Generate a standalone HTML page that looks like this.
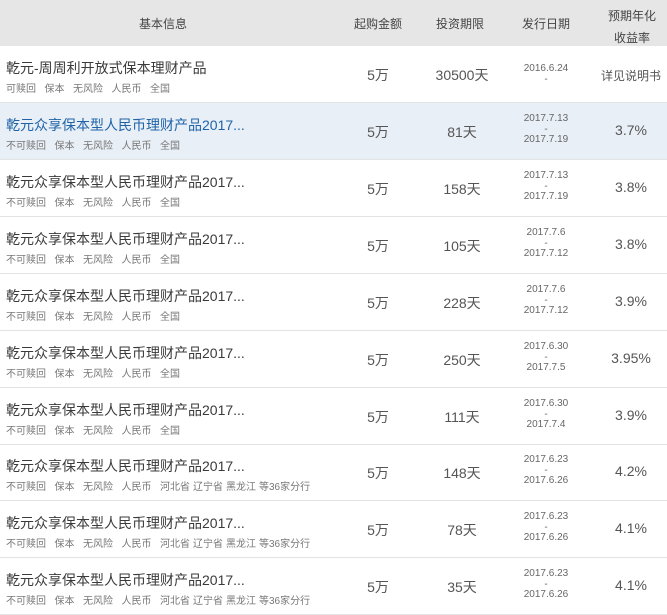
<!DOCTYPE html>
<html><head><meta charset="utf-8"><style>
*{margin:0;padding:0;box-sizing:border-box}
body{width:667px;height:607px;overflow:hidden;background:#fff;font-family:"Liberation Sans","Noto Sans CJK SC",sans-serif;color:#333;position:relative}
.hd{position:absolute;left:0;top:0;width:667px;height:46px;background:#e6e6e6;font-size:12px;color:#444}
.hd span{position:absolute;transform:translateX(-50%);white-space:nowrap;text-align:center}
.row{position:absolute;left:0;width:667px;height:57px;border-bottom:1px solid #e3e3e3}
.row.hl{background:#e9eff6}
.t{position:absolute;left:6px;top:12px;font-size:14px;white-space:nowrap;color:#3a3a3a}
.hl .t{color:#1e63a8}
.g{position:absolute;left:6px;top:34px;font-size:10px;color:#777;white-space:nowrap}
.g i{font-style:normal;margin-right:8.5px}
.c{position:absolute;transform:translateX(-50%);white-space:nowrap;text-align:center}
.a{left:378px;top:19px;font-size:14px;color:#555}
.p{left:462px;top:19px;font-size:14px;color:#555}
.d{left:546px;top:11px;font-size:10px;line-height:10.5px;color:#666}
.r{left:631px;top:19px;font-size:14px;color:#555}
</style></head><body>
<div class="hd">
<span style="left:163px;top:15px">基本信息</span>
<span style="left:378px;top:15px">起购金额</span>
<span style="left:460px;top:15px">投资期限</span>
<span style="left:546px;top:15px">发行日期</span>
<span style="left:632px;top:5px;line-height:22px">预期年化<br>收益率</span>
</div>

<div class="row" style="top:46px"><div class="t">乾元-周周利开放式保本理财产品</div><div class="g"><i>可赎回</i><i>保本</i><i>无风险</i><i>人民币</i><i>全国</i></div><div class="c a">5万</div><div class="c p">30500天</div><div class="c d" style="top:18px">2016.6.24<br>-</div><div class="c r" style="font-size:12px;top:21px">详见说明书</div></div>

<div class="row hl" style="top:103px"><div class="t">乾元众享保本型人民币理财产品2017...</div><div class="g"><i>不可赎回</i><i>保本</i><i>无风险</i><i>人民币</i><i>全国</i></div><div class="c a">5万</div><div class="c p">81天</div><div class="c d">2017.7.13<br>-<br>2017.7.19</div><div class="c r">3.7%</div></div>

<div class="row" style="top:160px"><div class="t">乾元众享保本型人民币理财产品2017...</div><div class="g"><i>不可赎回</i><i>保本</i><i>无风险</i><i>人民币</i><i>全国</i></div><div class="c a">5万</div><div class="c p">158天</div><div class="c d">2017.7.13<br>-<br>2017.7.19</div><div class="c r">3.8%</div></div>

<div class="row" style="top:217px"><div class="t">乾元众享保本型人民币理财产品2017...</div><div class="g"><i>不可赎回</i><i>保本</i><i>无风险</i><i>人民币</i><i>全国</i></div><div class="c a">5万</div><div class="c p">105天</div><div class="c d">2017.7.6<br>-<br>2017.7.12</div><div class="c r">3.8%</div></div>

<div class="row" style="top:274px"><div class="t">乾元众享保本型人民币理财产品2017...</div><div class="g"><i>不可赎回</i><i>保本</i><i>无风险</i><i>人民币</i><i>全国</i></div><div class="c a">5万</div><div class="c p">228天</div><div class="c d">2017.7.6<br>-<br>2017.7.12</div><div class="c r">3.9%</div></div>

<div class="row" style="top:331px"><div class="t">乾元众享保本型人民币理财产品2017...</div><div class="g"><i>不可赎回</i><i>保本</i><i>无风险</i><i>人民币</i><i>全国</i></div><div class="c a">5万</div><div class="c p">250天</div><div class="c d">2017.6.30<br>-<br>2017.7.5</div><div class="c r">3.95%</div></div>

<div class="row" style="top:388px"><div class="t">乾元众享保本型人民币理财产品2017...</div><div class="g"><i>不可赎回</i><i>保本</i><i>无风险</i><i>人民币</i><i>全国</i></div><div class="c a">5万</div><div class="c p">111天</div><div class="c d">2017.6.30<br>-<br>2017.7.4</div><div class="c r">3.9%</div></div>

<div class="row" style="top:444px"><div class="t">乾元众享保本型人民币理财产品2017...</div><div class="g"><i>不可赎回</i><i>保本</i><i>无风险</i><i>人民币</i><i style="margin-right:3px">河北省</i><i style="margin-right:3px">辽宁省</i><i style="margin-right:3px">黑龙江</i><i>等36家分行</i></div><div class="c a">5万</div><div class="c p">148天</div><div class="c d">2017.6.23<br>-<br>2017.6.26</div><div class="c r">4.2%</div></div>

<div class="row" style="top:501px"><div class="t">乾元众享保本型人民币理财产品2017...</div><div class="g"><i>不可赎回</i><i>保本</i><i>无风险</i><i>人民币</i><i style="margin-right:3px">河北省</i><i style="margin-right:3px">辽宁省</i><i style="margin-right:3px">黑龙江</i><i>等36家分行</i></div><div class="c a">5万</div><div class="c p">78天</div><div class="c d">2017.6.23<br>-<br>2017.6.26</div><div class="c r">4.1%</div></div>

<div class="row" style="top:558px"><div class="t">乾元众享保本型人民币理财产品2017...</div><div class="g"><i>不可赎回</i><i>保本</i><i>无风险</i><i>人民币</i><i style="margin-right:3px">河北省</i><i style="margin-right:3px">辽宁省</i><i style="margin-right:3px">黑龙江</i><i>等36家分行</i></div><div class="c a">5万</div><div class="c p">35天</div><div class="c d">2017.6.23<br>-<br>2017.6.26</div><div class="c r">4.1%</div></div>
</body></html>
